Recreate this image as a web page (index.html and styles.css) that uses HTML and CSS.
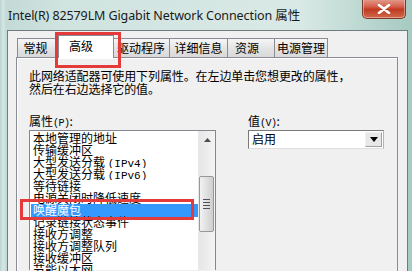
FILE: index.html
```html
<!DOCTYPE html>
<html lang="zh-CN">
<head>
    <meta charset="UTF-8">
    <meta name="viewport" content="width=device-width, initial-scale=1.0">
    <title>Intel(R) 82579LM Gigabit Network Connection 属性</title>
    <link rel="stylesheet" href="styles.css">
</head>
<body>
    <div class="window">
        <div class="titlebar">
            <div class="title">Intel(R) 82579LM Gigabit Network Connection 属性</div>
            <div class="close-btn">
                <svg width="14" height="10" viewBox="0 0 14 10">
                    <path d="M2 1 L12 9 M12 1 L2 9" stroke="#ffffff" stroke-width="2.6" stroke-linecap="round"/>
                </svg>
            </div>
        </div>

        <div class="dialog">
            <div class="tabs">
                <div class="tab tab-general">常规</div>
                <div class="tab tab-advanced active">高级</div>
                <div class="tab tab-driver">驱动程序</div>
                <div class="tab tab-details">详细信息</div>
                <div class="tab tab-resources">资源</div>
                <div class="tab tab-power">电源管理</div>
            </div>

            <div class="tab-panel">
                <p class="intro">此网络适配器可使用下列属性。在左边单击您想更改的属性，<br>然后在右边选择它的值。</p>

                <div class="props">
                    <div class="prop-col">
                        <div class="label">属性<span class="key">(P)</span>:</div>
                        <div class="listbox">
                            <ul class="items">
                                <li>本地管理的地址</li>
                                <li>传输缓冲区</li>
                                <li>大型发送分载 <span class="ascii">(IPv4)</span></li>
                                <li>大型发送分载 <span class="ascii">(IPv6)</span></li>
                                <li>等待链接</li>
                                <li>电源关闭时降低速度</li>
                                <li class="selected">唤醒魔包</li>
                                <li>记录链接状态事件</li>
                                <li>接收方调整</li>
                                <li>接收方调整队列</li>
                                <li>接收缓冲区</li>
                                <li>节能以太网</li>
                            </ul>
                            <div class="scrollbar">
                                <div class="arrow-up">
                                    <svg width="7" height="4" viewBox="0 0 7 4"><path d="M0 4 L3.5 0 L7 4 Z" fill="#4d4d4d"/></svg>
                                </div>
                                <div class="thumb">
                                    <span></span><span></span><span></span><span></span>
                                </div>
                            </div>
                        </div>
                    </div>

                    <div class="value-col">
                        <div class="label">值<span class="key">(V)</span>:</div>
                        <div class="combo">
                            <div class="combo-text">启用</div>
                            <div class="combo-btn">
                                <svg width="8" height="5" viewBox="0 0 8 5"><path d="M0 0 L8 0 L4 5 Z" fill="#000000"/></svg>
                            </div>
                        </div>
                    </div>
                </div>
            </div>
        </div>

        <div class="mark mark-tab"></div>
        <div class="mark mark-item"></div>
    </div>
</body>
</html>
```

FILE: styles.css
```css
* {
    margin: 0;
    padding: 0;
    box-sizing: border-box;
}

body {
    width: 412px;
    height: 271px;
    overflow: hidden;
    font-family: "Noto Sans CJK SC", "Noto Sans", sans-serif;
    font-size: 12px;
    color: #000;
}

.window {
    position: relative;
    width: 412px;
    height: 271px;
    background: linear-gradient(to right, #b9d3cf 0, #d6e7e4 3px, #c3dad6 6px, #cfe3df 60px, #d9e9e6 300px, #a7cbc2 408px);
    display: flex;
    flex-direction: column;
    overflow: hidden;
}

.titlebar {
    height: 30px;
    display: flex;
    justify-content: space-between;
    padding-left: 8px;
    padding-right: 6px;
}

.title {
    font-family: "Noto Sans", "Noto Sans CJK SC", sans-serif;
    font-size: 12.5px;
    color: #1a1a1a;
    padding-top: 5px;
    letter-spacing: -0.1px;
}

.close-btn {
    width: 44px;
    height: 20px;
    margin-top: -1px;
    border: 1px solid #7a3a30;
    border-top: none;
    border-radius: 0 0 5px 5px;
    background: linear-gradient(#e2a090 0, #d4604c 40%, #c03a22 55%, #d06a4a 100%);
    box-shadow: inset 0 0 0 1px rgba(255, 210, 200, 0.5);
    display: flex;
    align-items: center;
    justify-content: center;
}

.dialog {
    flex: 1;
    margin-left: 7px;
    margin-right: 4px;
    background: #f0f0f0;
    border-left: 1px solid #6f7b7c;
    border-top: 1px solid #6f7b7c;
    border-right: 1px solid #6f7b7c;
    padding: 4px 9px 0 8px;
    display: flex;
    flex-direction: column;
}

.tabs {
    display: flex;
    height: 22px;
    align-items: flex-end;
    padding-left: 1px;
    position: relative;
    z-index: 1;
}

.tab {
    height: 19px;
    line-height: 18px;
    text-align: center;
    border: 1px solid #898c95;
    border-bottom: none;
    margin-right: -1px;
    background: linear-gradient(#f6f6f6, #e3e3e3 55%, #d9d9d9);
    color: #000;
}

.tab-general { width: 43px; padding-right: 6px; }
.tab-driver { width: 58px; }
.tab-details { width: 59px; }
.tab-resources { width: 48px; padding-right: 8px; }
.tab-power { width: 54px; }

.tab.active {
    height: 23px;
    width: 56px;
    margin-left: -1px;
    margin-right: -2px;
    margin-bottom: -1px;
    padding-right: 10px;
    line-height: 19px;
    background: #ffffff;
    position: relative;
    z-index: 2;
}

.tab-panel {
    flex: 1;
    border: 1px solid #898c95;
    border-bottom: none;
    background: #f0f0f0;
    box-shadow: inset 1px 1px 0 #ffffff;
    padding: 11px 12px 0 12px;
}

.intro {
    line-height: 13px;
    letter-spacing: -0.1px;
}

.props {
    display: flex;
    margin-top: 19px;
}

.label {
    line-height: 13px;
    height: 16px;
}

.key {
    font-family: "Liberation Mono", monospace;
    font-size: 10px;
    letter-spacing: -0.5px;
}

.prop-col {
    width: 187px;
}

.listbox {
    display: flex;
    height: 140px;
    border: 1px solid #828790;
    border-bottom: none;
    background: #ffffff;
}

.items {
    list-style: none;
    flex: 1;
    padding-top: 1px;
    padding-left: 1px;
}

.items li {
    height: 12px;
    line-height: 12px;
    padding-left: 2px;
    white-space: nowrap;
    overflow: hidden;
}

.items li.selected {
    background: #3399ff;
    color: #ffffff;
    height: 13px;
    margin-bottom: -1px;
}

.ascii {
    font-family: "Liberation Mono", monospace;
    font-size: 11px;
}

.scrollbar {
    width: 17px;
    background: linear-gradient(to right, #e6e6e6, #f4f4f4);
    border-left: 1px solid #e9e9e9;
}

.arrow-up {
    height: 17px;
    display: flex;
    align-items: center;
    justify-content: center;
}

.thumb {
    margin: 28px 1px 0 0;
    height: 56px;
    border: 1px solid #979797;
    border-radius: 2px;
    background: linear-gradient(to right, #f2f2f2, #e0e0e0 50%, #cfcfcf);
    display: flex;
    flex-direction: column;
    align-items: center;
    justify-content: center;
    gap: 2px;
}

.thumb span {
    display: block;
    width: 7px;
    height: 1px;
    background: #505060;
}

.value-col {
    margin-left: 32px;
}

.combo {
    margin-top: 0;
    width: 136px;
    height: 19px;
    border: 1px solid #7a7a7a;
    border-right-color: #b4b4b4;
    border-bottom-color: #dedede;
    background: #ffffff;
    display: flex;
}

.combo-text {
    flex: 1;
    padding-left: 3px;
    line-height: 16px;
}

.combo-btn {
    width: 17px;
    margin: 1px;
    border: 1px solid #a0a0a0;
    border-top-color: #f0f0f0;
    border-left-color: #f0f0f0;
    background: #e8e8e8;
    display: flex;
    align-items: center;
    justify-content: center;
}

/* red annotation boxes drawn over the screenshot */
.mark {
    position: absolute;
    border: 3px solid #e53a3a;
    pointer-events: none;
    z-index: 5;
}

.mark-tab {
    left: 55px;
    top: 32px;
    width: 66px;
    height: 36px;
}

.mark-item {
    left: 20px;
    top: 199px;
    width: 174px;
    height: 21px;
}
```
